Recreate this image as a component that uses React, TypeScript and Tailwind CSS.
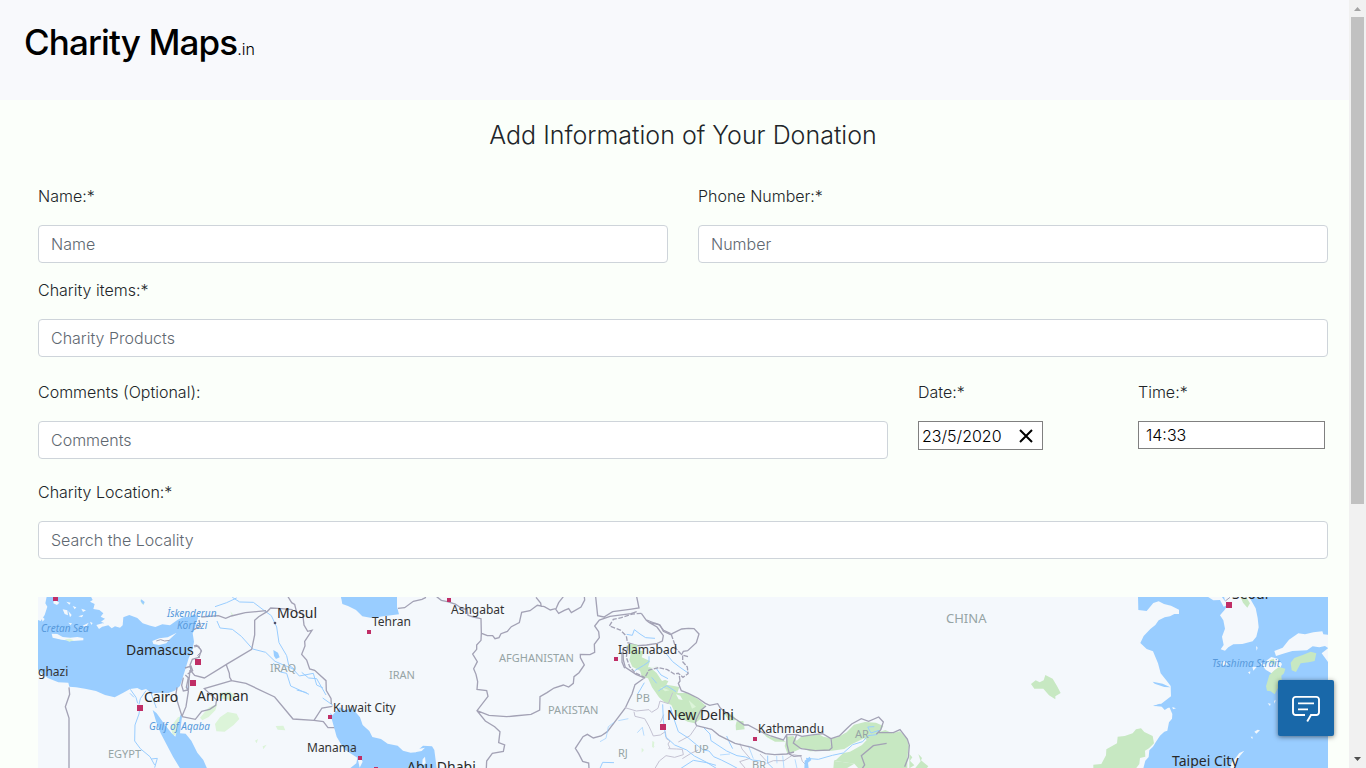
import type { ReactNode } from "react";

const fieldClass =
  "block h-[38px] w-full rounded border border-[#ced4da] bg-white px-3 pb-px text-base font-light text-[#495057] placeholder:text-[#5f6871] outline-none focus:border-[#80bdff]";

function Field({ id, label, className, children }: { id: string; label: string; className: string; children: ReactNode }) {
  return (
    <div className={className}>
      <label htmlFor={id} className="mb-4 block text-base leading-[25px] font-light">
        {label}
      </label>
      {children}
    </div>
  );
}

const water = "fill-[#99cdff]";
const land = "fill-[#f4f8fc]";
const forest = "fill-[#c7e8c2]";
const pale = "fill-[#dcf4d9]";
const border = "fill-none stroke-[#a3a2b5] stroke-[4]";
const region = "fill-none stroke-[#c4c2d2] stroke-[3]";
const river = "fill-none stroke-[#99cdff] stroke-[3]";

function WestRegion() {
  return (
    <g transform="translate(0 590) scale(0.333333)">
      <path className={water} d="M114 90 L122 93 134 75 142 50 136 40 140 20 L273 20 278 30 270 35 284 42 280 57 298 60 310 70 302 80 315 86 303 95 312 99 307 110 325 106 335 115 345 109 360 113 368 106 370 82 388 75 412 84 428 100 451 107 466 111 487 103 510 106 532 90 548 82 569 80 584 72 594 83 588 100 584 118 578 130 582 155 577 180 566 205 556 238 549 260 540 288 524 302 505 309 480 308 455 310 438 297 425 301 412 294 390 297 367 310 344 322 315 315 288 303 255 296 228 292 208 290 205 278 175 277 145 265 130 255 114 240Z" />
      <path className={land} d="M155 131 L172 132 188 141 211 143 232 141 250 144 250 151 218 153 185 149 158 143Z M457 153 L478 145 503 142 530 128 506 151 499 160 477 165 460 162Z M188 58 L202 61 204 76 194 72Z M162 28 L178 38 171 45 160 40Z M199 35 L212 38 208 44Z M218 48 L229 52 224 58Z M205 63 L215 75 210 82Z M235 79 L250 74 246 82Z M248 107 L266 98 258 112Z M289 105 L310 99 314 105 297 117Z M122 76 L134 87 128 95Z M205 98 L216 100 212 106Z M270 95 L278 99 274 105Z M244 56 L258 61 249 66Z" />
      <path className={pale} d="M194 148 L210 146 222 151 208 155Z M645 402 L660 382 683 366 710 371 718 387 701 405 674 425 649 424Z M512 410 L534 382 546 378 533 430 519 438Z M657 309 L690 305 710 320 690 330 660 325Z M600 383 L625 353 652 342 646 361 626 381 607 391Z M827 408 L850 407 856 421 833 419Z M765 452 L774 447 770 460Z M788 469 L800 464 790 478Z M691 64 L700 74 696 79Z M420 28 L434 38 430 45 424 40Z" />
      <path className={water} d="M458 360 L470 370 495 405 515 430 526 440 534 410 541 374 546 380 540 430 557 431 574 452 592 488 610 510 621 535 540 535 519 500 482 430 469 397Z M1000 373 L1014 360 1050 367 1050 466 1037 458 1020 430 1008 390Z M1023 20 L1050 20 1050 48 1030 40Z M820 180 L834 188 839 202 828 207 822 198Z M424 28 L434 36 430 44 422 34Z" />
      <path className={river} d="M420 350 L417 372 405 405 404 453 421 476 450 500 464 525 M391 298 L408 322 413 340 M438 302 L421 326 417 343 M454 312 L469 354 M402 322 L390 310 M454 507 L472 505 464 533 M645 50 L680 38 710 24 M651 93 L660 114 697 118 724 139 758 177 797 187 825 214 879 237 898 258 940 250 950 285 969 294 M697 22 L719 36 760 37 793 62 814 77 830 111 837 158 860 197 866 225 884 238 M820 219 L841 246 860 250 872 288 927 313 M890 300 L920 308 M905 247 L926 264 950 266 978 315 M566 282 L561 303 M968 324 L999 346" />
      <path className={border} d="M207 292 L209 313 196 350 207 384 207 535 M801 65 L812 54 834 55 878 59 M801 65 L776 80 764 91 764 135 755 178 683 221 613 264 584 256 573 243 570 225 577 208 597 202 604 181 590 166 582 168 M597 90 L601 109 581 119 M604 81 L655 77 677 85 694 78 736 68 798 62 M864 20 L875 38 884 43 890 67 908 70 912 105 923 124 936 121 914 154 915 168 905 193 920 210 929 237 944 241 978 272 979 302 993 325 994 342 M678 222 L688 250 689 262 695 272 738 280 824 321 879 387 942 391 970 395 984 413 1005 413 M695 272 L613 296 650 330 647 346 629 358 605 364 586 388 546 380 M570 240 L566 280 565 305 558 350 546 379 M556 255 L565 263 559 292 564 300 550 303 545 286 550 263 M531 292 L527 318 546 379 M942 391 L966 354 997 349 M555 234 L573 228 578 242 563 252" />
      <path className="fill-none stroke-[#a3a2b5] stroke-[3]" d="M469 153 L482 149 494 153 509 151 M583 171 L596 168 605 185 593 196 599 204" />
      <circle cx="825" cy="99" r="4" className="fill-[#52506a]" />
    </g>
  );
}

function CentralRegion() {
  return (
    <g transform="translate(330 590) scale(0.333333)">
      <path className={water} d="M33 20 L201 20 201 50 207 73 160 79 125 84 97 79 78 60 54 48 37 42Z M0 368 L8 376 30 352 45 361 66 354 90 382 98 405 118 423 127 441 153 447 173 461 203 467 219 482 242 488 257 487 279 467 306 469 313 480 320 535 60 535 79 520 82 503 42 478 20 440Z" />
      <path className={land} d="M245 481 L285 473 275 483 255 487Z M285 500 L287 519 276 529 278 508Z M84 510 L91 500 98 515 89 533Z" />
      <path className={border} d="M204 55 L224 53 250 34 276 28 288 22 M320 20 L334 31 352 35 376 42 398 57 411 57 414 76 430 81 453 86 454 130 453 151 440 165 440 178 428 192 442 215 431 236 438 253 443 275 441 298 470 302 474 319 441 362 466 393 494 410 510 425 506 458 524 465 520 484 487 490 470 513 469 535 M455 130 L472 137 488 137 495 146 507 143 513 131 532 124 544 110 568 98 575 67 600 62 622 46 643 50 661 60 676 56 686 70 703 61 716 56 724 68 753 51 764 30 763 20 M634 51 L632 39 618 22 M678 56 L686 38 700 20 M797 20 L800 49 803 77 822 81 848 65 899 58 927 54 920 20 M441 362 L477 376 530 380 552 378 603 373 629 360 630 320 651 308 672 294 700 285 716 291 730 280 732 260 747 248 763 225 751 203 751 193 780 194 794 187 793 163 808 143 806 125 794 108 808 90 840 79 903 71 920 65 M879 177 L880 210 886 232 918 253 943 264 915 284 906 312 897 330 886 354 851 400 832 425 813 438 790 444 772 433 759 440 736 475 746 491 758 514 776 519 777 535" />
      <path className={border} strokeDasharray="14 5" d="M934 70 L907 72 874 83 850 88 838 108 871 120 889 138 892 156" />
      <path className={border} d="M934 70 L949 91 957 97 987 104 1001 121 1022 131 M957 97 L981 111 1000 137 997 153 982 160 950 165 923 167 892 158" />
    </g>
  );
}

function HimalayaRegion() {
  return (
    <g transform="translate(600 590) scale(0.333333)">
      <path className={forest} d="M78 168 L90 162 113 164 108 180 131 184 125 202 150 213 144 232 173 230 185 244 188 266 205 274 199 284 218 287 238 291 232 309 260 309 281 318 302 334 318 348 309 360 302 386 285 400 263 395 229 377 214 345 193 336 177 322 156 292 144 265 126 261 120 242 97 230 88 210 92 193Z M410 394 L430 393 434 418 408 421 407 406Z M370 367 L398 374 410 390 388 392Z M484 424 L510 440 547 448 557 455 525 455 500 441Z M561 440 L580 438 590 452 605 439 632 437 655 431 670 440 690 444 695 482 630 484 607 474 580 486 562 490 554 468Z M692 446 L713 442 740 427 762 404 795 396 828 398 850 408 840 425 856 420 877 430 900 424 920 445 927 470 922 500 922 535 775 535 763 521 733 517 702 513 715 492 750 485 786 465 800 450 792 445 758 461 733 477 695 482Z M928 492 L937 502 930 512 943 526 928 535Z M955 492 L966 504 963 511 985 529 980 535 945 535 962 514Z M160 458 L163 472 158 466Z" />
      <path className={forest} d="M702 513 L733 517 763 521 740 535 700 535Z" />
      <path className={land} d="M150 232 L178 231 200 244 205 266 186 273 170 249Z M228 313 L241 317 248 330 236 328Z M618 501 L730 489 708 510 650 513Z" />
      <path className={pale} d="M157 453 L163 456 161 475 156 470Z M125 473 L132 480 125 488Z M180 290 L209 301 195 304Z M266 330 L288 350 276 356Z" />
      <path className={region} d="M75 353 L109 363 147 359 155 367 174 355 180 333 205 341 218 308 M102 365 L105 379 134 386 147 409 160 438 181 435 196 425 199 446 210 453 204 462 210 475 M191 374 L181 398 M205 476 L230 477 247 478 250 494 224 502 198 497 178 513 165 535 M247 506 L273 490 295 480 M290 408 L270 437 235 456 M420 460 L426 477 450 505 419 515 436 535 M500 520 L520 512 552 512 580 494 602 498 607 514 618 525 M480 492 L498 512" />
      <path className={river} d="M188 343 L190 390 197 440 224 465 260 480 283 498 318 516 349 535 M211 350 L222 387 235 425 265 444 289 464 310 480 327 483 341 500 364 510 390 523 412 535 M309 411 L330 432 333 452 380 483 411 497 437 501 457 510 483 513 M380 438 L389 459 398 476 M503 497 L503 519 519 535 M618 505 L655 508 697 496 730 489 758 464 788 455 804 437 830 434 837 421 813 429 803 411 823 410 M113 312 L122 297 133 278 M0 535 L8 517 42 518 M243 535 L280 511 320 518 348 526 M104 242 L131 226 147 215 147 199 M170 237 L183 255 204 266 M155 262 L170 280 M175 303 L200 287 228 305 M80 133 L97 136 103 119 120 132 137 143 165 145 M178 176 L197 189 218 215 240 232 266 250" />
      <path className="fill-none stroke-[#99cdff] stroke-[2]" d="M0 455 L18 445 25 410 42 397 M55 392 L85 386 M112 428 L127 412 132 437 M360 495 L390 492 M445 467 L460 506 M530 498 L531 520 M548 497 L552 535 M585 508 L591 535" />
      <path className={water} d="M614 512 L629 500 634 510 624 518 626 535 613 535Z" />
      <path className={border} d="M66 186 L66 216 74 235 M212 134 L218 130 245 117 265 115 282 116 297 132 289 158 263 182 250 184 244 195 M140 90 L163 99 180 105 190 124 212 134 M238 258 L240 273 235 280 244 302 265 310 293 324 316 340 329 346 353 341 361 354 387 375 411 390 433 405 444 405 478 423 512 438 550 450 560 434 590 434 M290 407 L335 418 357 436 405 460 455 472 496 491 524 494 560 492 582 486 M318 348 L302 361 289 388 286 399 290 407 M590 434 L606 439 642 434 668 431 693 446 696 473 688 480 646 482 603 476 580 459 590 434 M560 434 L561 463 568 492 582 499 605 497 M693 446 L718 438 740 416 755 402 784 386 806 394 836 381 850 396 842 420 829 433 M835 428 L880 428 900 419 922 447 928 466 925 502 914 530 M860 460 L820 467 784 497 794 525 787 535" />
      <path className={border} strokeDasharray="14 4" d="M264 200 L248 195 248 215 262 231 264 251 249 262 235 250 223 252 202 239 176 233 147 240 134 264 M83 169 L79 202 89 230 105 248 135 263 M214 134 L229 177 243 192" />
    </g>
  );
}

function EastRegion() {
  return (
    <g transform="translate(1020 590) scale(0.333333)">
      <path className={water} d="M354 20 L924 20 924 535 370 535 376 512 386 501 388 481 399 470 408 455 420 437 433 425 442 422 447 397 456 386 457 372 449 353 433 350 400 347 424 341 453 319 452 288 440 272 422 250 414 220 399 184 380 177 361 159 371 138 391 117 406 105 416 91 434 82 450 79 463 72 477 72 477 59 453 47 432 42 416 34 400 39 380 63 355 60Z" />
      <path className={land} d="M563 20 L605 20 615 34 628 43 611 50 600 30 580 31Z M612 20 L687 20 707 55 713 84 716 112 709 140 698 154 667 162 640 163 625 172 615 182 602 178 611 165 606 140 615 116 610 91 600 76 613 61 620 50Z M763 183 L788 173 807 149 835 130 855 133 880 127 907 124 910 133 924 134 924 174 915 168 898 172 878 169 861 181 817 183 794 190 768 198Z M905 190 L924 175 924 216Z M721 218 L738 224 739 212 754 201 773 206 786 222 780 236 762 254 737 239Z M708 168 L713 173 710 182Z M603 218 L613 213 625 222 611 228Z M684 247 L691 244 690 253Z M697 230 L710 231 700 242Z M743 340 L752 341 750 348Z M762 333 L767 329 764 341Z M692 440 L698 440 697 448Z M703 425 L713 419 720 421 709 431Z M649 501 L658 489 673 482 659 499 643 535 631 535 634 519Z M457 351 L468 355 459 358Z" />
      <path className={water} d="M398 275 L428 281 451 292 433 291 404 281Z M399 348 L420 341 449 350 434 360 424 349Z" />
      <path className={forest} d="M662 22 L680 24 690 40 682 53 669 38Z M812 218 L823 204 848 195 872 185 889 190 884 213 866 217 842 220 828 246 815 241Z M738 289 L748 255 763 241 777 231 796 236 792 250 784 257 786 278 772 297 764 313 752 304 741 302Z M748 211 L762 206 766 225 752 220Z M33 282 L47 271 59 277 71 271 76 255 98 266 111 288 122 309 106 319 106 328 87 316 70 296 43 296Z M220 524 L244 522 258 496 259 478 291 460 293 440 314 438 338 430 348 418 363 415 373 426 398 438 402 460 387 475 375 482 376 500 360 504 358 522 348 535 220 535Z" />
      <path className="fill-none stroke-[#a3a2b5] stroke-[3]" d="M616 33 L630 22" />
    </g>
  );
}

type Place = { x: number; y: number; text: string; kind: string };

const city = "fill-[#333333] text-[12px]";
const bigCity = "fill-[#292929] text-[14px]";
const country = "fill-[#96a4a5] text-[11px]";
const sea = "fill-[#5799db] text-[10px] italic";

const places: Place[] = [
  { x: 277, y: 618, text: "Mosul", kind: bigCity },
  { x: 126, y: 655, text: "Damascus", kind: bigCity },
  { x: 144, y: 702, text: "Cairo", kind: bigCity },
  { x: 197, y: 701, text: "Amman", kind: bigCity },
  { x: 38, y: 676, text: "ghazi", kind: city },
  { x: 372, y: 626, text: "Tehran", kind: city },
  { x: 451, y: 614, text: "Ashgabat", kind: city },
  { x: 333, y: 712, text: "Kuwait City", kind: city },
  { x: 307, y: 752, text: "Manama", kind: city },
  { x: 407, y: 772, text: "Abu Dhabi", kind: bigCity },
  { x: 618, y: 654, text: "Islamabad", kind: city },
  { x: 667, y: 720, text: "New Delhi", kind: bigCity },
  { x: 758, y: 733, text: "Kathmandu", kind: city },
  { x: 1172, y: 766, text: "Taipei City", kind: bigCity },
  { x: 1232, y: 599, text: "Seoul", kind: bigCity },
  { x: 108, y: 758, text: "EGYPT", kind: country },
  { x: 270, y: 672, text: "IRAQ", kind: country },
  { x: 389, y: 679, text: "IRAN", kind: country },
  { x: 499, y: 662, text: "AFGHANISTAN", kind: country },
  { x: 548, y: 714, text: "PAKISTAN", kind: country },
  { x: 946, y: 623, text: "CHINA", kind: "fill-[#96a4a5] text-[13px]" },
  { x: 636, y: 702, text: "PB", kind: country },
  { x: 618, y: 757, text: "RJ", kind: country },
  { x: 694, y: 753, text: "UP", kind: country },
  { x: 752, y: 769, text: "BR", kind: country },
  { x: 855, y: 738, text: "AR", kind: country },
  { x: 41, y: 632, text: "Cretan Sea", kind: sea },
  { x: 167, y: 617, text: "İskenderun", kind: sea },
  { x: 177, y: 629, text: "Körfezi", kind: sea },
  { x: 149, y: 730, text: "Gulf of Aqaba", kind: sea },
  { x: 1212, y: 667, text: "Tsushima Strait", kind: sea },
];

const markers = [
  { x: 53, y: 596, size: 5 },
  { x: 195, y: 659, size: 6 },
  { x: 190, y: 680, size: 6 },
  { x: 137, y: 705, size: 6 },
  { x: 328, y: 715, size: 4 },
  { x: 367, y: 630, size: 4 },
  { x: 447, y: 598, size: 4 },
  { x: 358, y: 756, size: 4 },
  { x: 374, y: 767, size: 4 },
  { x: 614, y: 657, size: 4 },
  { x: 660, y: 724, size: 6 },
  { x: 753, y: 737, size: 4 },
  { x: 1226, y: 602, size: 6 },
];

function CharityMap() {
  return (
    <svg
      viewBox="38 597 1290 171"
      preserveAspectRatio="xMinYMin slice"
      role="img"
      aria-label="Map"
      className="block h-full w-full bg-[#f4f8fc] font-['Noto_Sans','Open_Sans',sans-serif]"
    >
      <WestRegion />
      <CentralRegion />
      <HimalayaRegion />
      <EastRegion />
      {markers.map((m) => (
        <rect key={`${m.x}-${m.y}`} x={m.x} y={m.y} width={m.size} height={m.size} className="fill-[#c02e66]" />
      ))}
      {places.map((p) => (
        <text key={p.text} x={p.x} y={p.y} className={p.kind}>
          {p.text}
        </text>
      ))}
    </svg>
  );
}

export default function App() {
  return (
    <div className="flex h-screen flex-col overflow-hidden bg-[#fbfffa] font-['Inter',sans-serif] text-[#212529]">
      <header className="h-[100px] shrink-0 bg-[#f8f9fc] px-6 pt-4">
        <a href="#" className="inline-flex items-baseline text-black">
          <span className="text-[35px] leading-[52px] font-medium tracking-tight">Charity Maps</span>
          <span className="text-base font-light">.in</span>
        </a>
      </header>

      <main className="flex min-h-0 flex-1 flex-col px-[38px] pt-5">
        <h1 className="mb-[34px] text-center text-[25px] leading-[30px] font-light">Add Information of Your Donation</h1>

        <form className="grid grid-cols-12 gap-x-[30px]" onSubmit={(e) => e.preventDefault()}>
          <Field id="name" label="Name:*" className="col-span-6">
            <input id="name" type="text" placeholder="Name" className={fieldClass} />
          </Field>
          <Field id="phone" label="Phone Number:*" className="col-span-6">
            <input id="phone" type="text" placeholder="Number" className={fieldClass} />
          </Field>
          <Field id="items" label="Charity items:*" className="col-span-12 mt-[15px]">
            <input id="items" type="text" placeholder="Charity Products" className={fieldClass} />
          </Field>
          <Field id="comments" label="Comments (Optional):" className="col-span-8 mt-[23px]">
            <input id="comments" type="text" placeholder="Comments" className={fieldClass} />
          </Field>
          <Field id="date" label="Date:*" className="col-span-2 mt-[23px]">
            <div className="flex h-[29px] w-[125px] items-center border border-[#808080] bg-white text-black">
              <input id="date" type="text" defaultValue="23/5/2020" className="w-0 flex-1 bg-transparent pl-[3px] text-base font-light outline-none" />
              <button type="button" aria-label="Clear date" className="flex w-8 shrink-0 items-center justify-center">
                <svg viewBox="0 0 14 14" className="size-[14px] fill-none stroke-black stroke-2">
                  <path d="M1 1 L13 13 M13 1 L1 13" />
                </svg>
              </button>
            </div>
          </Field>
          <Field id="time" label="Time:*" className="col-span-2 mt-[23px]">
            <input
              id="time"
              type="text"
              defaultValue="14:33"
              className="block h-7 w-[187px] border border-[#808080] bg-white px-[7px] text-base font-light text-black outline-none"
            />
          </Field>
          <Field id="location" label="Charity Location:*" className="col-span-12 mt-[21px]">
            <input id="location" type="text" placeholder="Search the Locality" className={fieldClass} />
          </Field>
        </form>

        <div className="mt-[38px] min-h-0 flex-1">
          <CharityMap />
        </div>
      </main>

      <button
        type="button"
        aria-label="Open chat"
        className="fixed right-8 bottom-8 flex size-14 items-center justify-center rounded-xs bg-[#1968a9] shadow-[0_1px_5px_rgba(0,0,0,0.5)]"
      >
        <svg viewBox="0 0 28 28" className="size-7 fill-none stroke-white stroke-[1.9]">
          <path d="M13 21 H3.7 A2.7 2.7 0 0 1 1 18.3 V5.6 A2.7 2.7 0 0 1 3.7 2.9 H24.3 A2.7 2.7 0 0 1 27 5.6 V18.3 A2.7 2.7 0 0 1 24.3 21 H19 L15.2 27.4 M6 9.4 H22 M6 15.4 H16" />
        </svg>
      </button>

      <div aria-hidden="true" className="fixed inset-y-0 right-0 flex w-[17px] flex-col items-center bg-[#f1f1f1]">
        <svg viewBox="0 0 17 17" className="size-[17px] shrink-0 fill-[#a3a3a3]">
          <path d="M5 11 L8.5 7 L12 11Z" />
        </svg>
        <div className="h-[487px] w-[13px] bg-[#c1c1c1]" />
        <svg viewBox="0 0 17 17" className="mt-auto size-[17px] shrink-0 fill-[#505050]">
          <path d="M5 6 L8.5 10 L12 6Z" />
        </svg>
      </div>
    </div>
  );
}
